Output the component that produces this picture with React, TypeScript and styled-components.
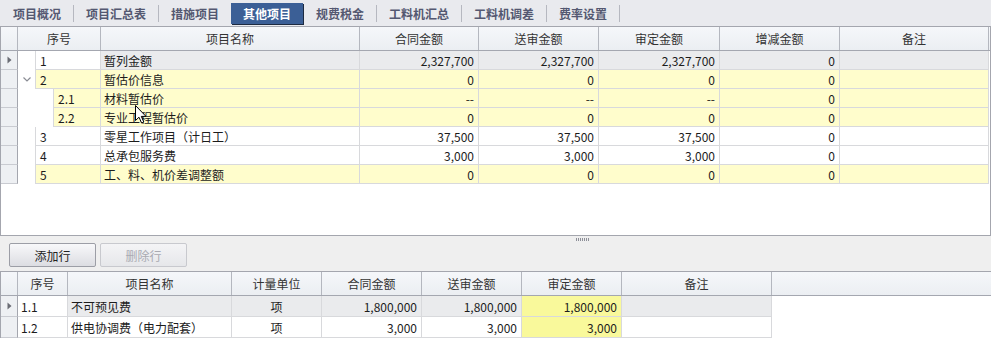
import React from 'react';
import styled, { createGlobalStyle } from 'styled-components';

const GlobalStyle = createGlobalStyle`
  html, body { margin: 0; padding: 0; }
  body {
    font-family: "Noto Sans CJK SC", "Noto Sans", sans-serif;
    font-size: 12px;
    color: #1c1c1c;
    background: #efefef;
  }
  * { box-sizing: border-box; }
`;

const TOP_COLS = '17px 83px 259px 119px 120px 121px 120px 149px';
const BOTTOM_COLS = '17px 50px 164px 90px 100px 100px 100px 150px';

type Tone = 'white' | 'yellow' | 'gray';
const toneBg: Record<Tone, string> = { white: '#ffffff', yellow: '#fffdcc', gray: '#eaebed' };

const Page = styled.div`
  position: relative;
  width: 991px;
  height: 338px;
  overflow: hidden;
  display: flex;
  flex-direction: column;
  background: #efefef;
`;

const TabBar = styled.div`
  height: 26px;
  display: flex;
  align-items: center;
  padding-left: 1px;
  background: #e9eaee;
`;

const Tab = styled.div<{ $active?: boolean }>`
  height: 21px;
  line-height: 21px;
  padding: 0 12px;
  font-weight: bold;
  white-space: nowrap;
  color: ${p => (p.$active ? '#ffffff' : '#545871')};
  background: ${p => (p.$active ? '#3b5f96' : 'transparent')};
  box-shadow: ${p => (p.$active ? '1px 1px 0 #1d2a40' : 'none')};
`;

const TabSep = styled.div<{ $hidden?: boolean }>`
  width: 1px;
  height: 17px;
  background: ${p => (p.$hidden ? 'transparent' : '#b6b8c0')};
`;

const Panel = styled.div`
  height: 210px;
  background: #ffffff;
  border: 1px solid #a4a6ae;
  display: flex;
  flex-direction: column;
`;

const HeaderRow = styled.div<{ $cols: string; $h: number }>`
  display: grid;
  grid-template-columns: ${p => p.$cols};
  height: ${p => p.$h}px;
  background: linear-gradient(#f5f7fa, #ebeef2);
  border-bottom: 1px solid #a4a7b0;
`;

const HeadCell = styled.div`
  display: flex;
  align-items: center;
  justify-content: center;
  color: #333;
  border-right: 1px solid #b4b7bf;
  white-space: nowrap;
`;

const HeadFill = styled.div`
  flex: 1;
`;

const Row = styled.div<{ $cols: string; $h: number }>`
  display: grid;
  grid-template-columns: ${p => p.$cols};
  height: ${p => p.$h}px;
`;

const Indicator = styled.div`
  display: flex;
  align-items: center;
  justify-content: center;
  background: #eef0f3;
  border-right: 1px solid #a4a6ae;
  border-bottom: 1px solid #c9cbd1;
`;

const Cell = styled.div<{ $tone: Tone; $align?: 'left' | 'right' | 'center' }>`
  display: flex;
  align-items: center;
  justify-content: ${p => (p.$align === 'right' ? 'flex-end' : p.$align === 'center' ? 'center' : 'flex-start')};
  padding: 0 ${p => (p.$align === 'right' ? '4px' : '3px')};
  background: ${p => toneBg[p.$tone]};
  border-right: 1px solid #d8d9dc;
  border-bottom: 1px solid #d8d9dc;
  white-space: nowrap;
  overflow: hidden;
`;

const TreeCell = styled.div`
  display: flex;
  min-width: 0;
`;

const Indent = styled.div<{ $w: number }>`
  width: ${p => p.$w}px;
  flex: none;
  display: flex;
  align-items: center;
  justify-content: center;
  background: #ffffff;
`;

const TreeBody = styled(Cell)`
  flex: 1;
  padding-left: 4px;
  border-left: 1px solid #d8d9dc;
`;

const Toolbar = styled.div`
  position: relative;
  height: 35px;
  display: flex;
  align-items: flex-end;
  gap: 4px;
  padding: 0 0 4px 9px;
  background: #efefef;
`;

const Grip = styled.div`
  position: absolute;
  left: 576px;
  top: 2px;
  width: 13px;
  height: 3px;
  background: repeating-linear-gradient(90deg, #8d8f98 0 1px, transparent 1px 2px);
`;

const Button = styled.div<{ $disabled?: boolean }>`
  width: 87px;
  height: 24px;
  display: flex;
  align-items: center;
  justify-content: center;
  border-radius: 2px;
  border: 1px solid ${p => (p.$disabled ? '#c8c9ce' : '#9c9ea6')};
  background: ${p => (p.$disabled ? 'linear-gradient(#f4f4f6, #e6e7ea)' : 'linear-gradient(#f8f8fa, #dcdde2)')};
  color: ${p => (p.$disabled ? '#a9aab2' : '#222')};
`;

const BottomPanel = styled.div`
  flex: 1;
  background: #ffffff;
  border-top: 1px solid #a4a6ae;
  border-left: 1px solid #a4a6ae;
  display: flex;
  flex-direction: column;
`;

const HeaderWrap = styled.div`
  display: flex;
  background: linear-gradient(#f5f7fa, #ebeef2);
`;

const Cursor = styled.svg`
  position: absolute;
  left: 135px;
  top: 105px;
`;

const RowArrow = () => (
  <svg width="5" height="8" viewBox="0 0 5 8">
    <path d="M0.5 0.5 L4.5 4 L0.5 7.5 Z" fill="#6a6c74" />
  </svg>
);

const Chevron = () => (
  <svg width="8" height="5" viewBox="0 0 8 5">
    <path d="M0.5 0.5 L4 4 L7.5 0.5" fill="none" stroke="#8a8c94" strokeWidth="1.2" />
  </svg>
);

const tabs = ['项目概况', '项目汇总表', '措施项目', '其他项目', '规费税金', '工料机汇总', '工料机调差', '费率设置'];
const activeTab = 3;

const topHeads = ['', '序号', '项目名称', '合同金额', '送审金额', '审定金额', '增减金额', '备注'];

interface TopRow {
  no: string;
  name: string;
  level: number;
  tone: Tone;
  values: string[];
  selected?: boolean;
  expanded?: boolean;
}

const topRows: TopRow[] = [
  { no: '1', name: '暂列金额', level: 0, tone: 'gray', values: ['2,327,700', '2,327,700', '2,327,700', '0'], selected: true },
  { no: '2', name: '暂估价信息', level: 0, tone: 'yellow', values: ['0', '0', '0', '0'], expanded: true },
  { no: '2.1', name: '材料暂估价', level: 1, tone: 'yellow', values: ['--', '--', '--', '0'] },
  { no: '2.2', name: '专业工程暂估价', level: 1, tone: 'yellow', values: ['0', '0', '0', '0'] },
  { no: '3', name: '零星工作项目（计日工）', level: 0, tone: 'white', values: ['37,500', '37,500', '37,500', '0'] },
  { no: '4', name: '总承包服务费', level: 0, tone: 'white', values: ['3,000', '3,000', '3,000', '0'] },
  { no: '5', name: '工、料、机价差调整额', level: 0, tone: 'yellow', values: ['0', '0', '0', '0'] },
];

const bottomHeads = ['', '序号', '项目名称', '计量单位', '合同金额', '送审金额', '审定金额', '备注'];

const bottomRows = [
  { no: '1.1', name: '不可预见费', unit: '项', values: ['1,800,000', '1,800,000', '1,800,000'], tone: 'gray' as Tone, selected: true },
  { no: '1.2', name: '供电协调费（电力配套）', unit: '项', values: ['3,000', '3,000', '3,000'], tone: 'white' as Tone },
];

function App() {
  return (
    <Page>
      <GlobalStyle />
      <TabBar>
        {tabs.map((t, i) => (
          <React.Fragment key={t}>
            <Tab $active={i === activeTab}>{t}</Tab>
            {i !== activeTab - 1 && <TabSep $hidden={i === activeTab} />}
          </React.Fragment>
        ))}
      </TabBar>

      <Panel>
        <HeaderRow $cols={TOP_COLS} $h={24}>
          {topHeads.map((h, i) => (
            <HeadCell key={i}>{h}</HeadCell>
          ))}
        </HeaderRow>
        {topRows.map(r => (
          <Row key={r.no} $cols={TOP_COLS} $h={19}>
            <Indicator>{r.selected && <RowArrow />}</Indicator>
            <TreeCell>
              <Indent $w={17 + r.level * 18}>{r.expanded && <Chevron />}</Indent>
              <TreeBody $tone={r.selected ? 'white' : r.tone}>{r.no}</TreeBody>
            </TreeCell>
            <Cell $tone={r.tone}>{r.name}</Cell>
            {r.values.map((v, i) => (
              <Cell key={i} $tone={r.tone} $align="right">{v}</Cell>
            ))}
            <Cell $tone={r.tone} />
          </Row>
        ))}
      </Panel>

      <Toolbar>
        <Grip />
        <Button>添加行</Button>
        <Button $disabled>删除行</Button>
      </Toolbar>

      <BottomPanel>
        <HeaderWrap>
          <HeaderRow $cols={BOTTOM_COLS} $h={24}>
            {bottomHeads.map((h, i) => (
              <HeadCell key={i}>{h}</HeadCell>
            ))}
          </HeaderRow>
          <HeadFill style={{ borderBottom: '1px solid #a4a7b0' }} />
        </HeaderWrap>
        {bottomRows.map(r => (
          <Row key={r.no} $cols={BOTTOM_COLS} $h={21}>
            <Indicator>{r.selected && <RowArrow />}</Indicator>
            <Cell $tone="white">{r.no}</Cell>
            <Cell $tone={r.tone}>{r.name}</Cell>
            <Cell $tone={r.tone} $align="center">{r.unit}</Cell>
            <Cell $tone={r.tone} $align="right">{r.values[0]}</Cell>
            <Cell $tone={r.tone} $align="right">{r.values[1]}</Cell>
            <Cell $tone={'yellow'} $align="right" style={{ background: '#f9f99b' }}>{r.values[2]}</Cell>
            <Cell $tone={r.tone} />
          </Row>
        ))}
      </BottomPanel>

      <Cursor width="12" height="19" viewBox="0 0 12 19">
        <path d="M0.5 0.5 L0.5 15.5 L4 12.2 L6.6 18 L8.8 17 L6.3 11.4 L11 11.4 Z" fill="#ffffff" stroke="#000000" strokeWidth="1" strokeLinejoin="round" />
      </Cursor>
    </Page>
  );
}

export default App;
